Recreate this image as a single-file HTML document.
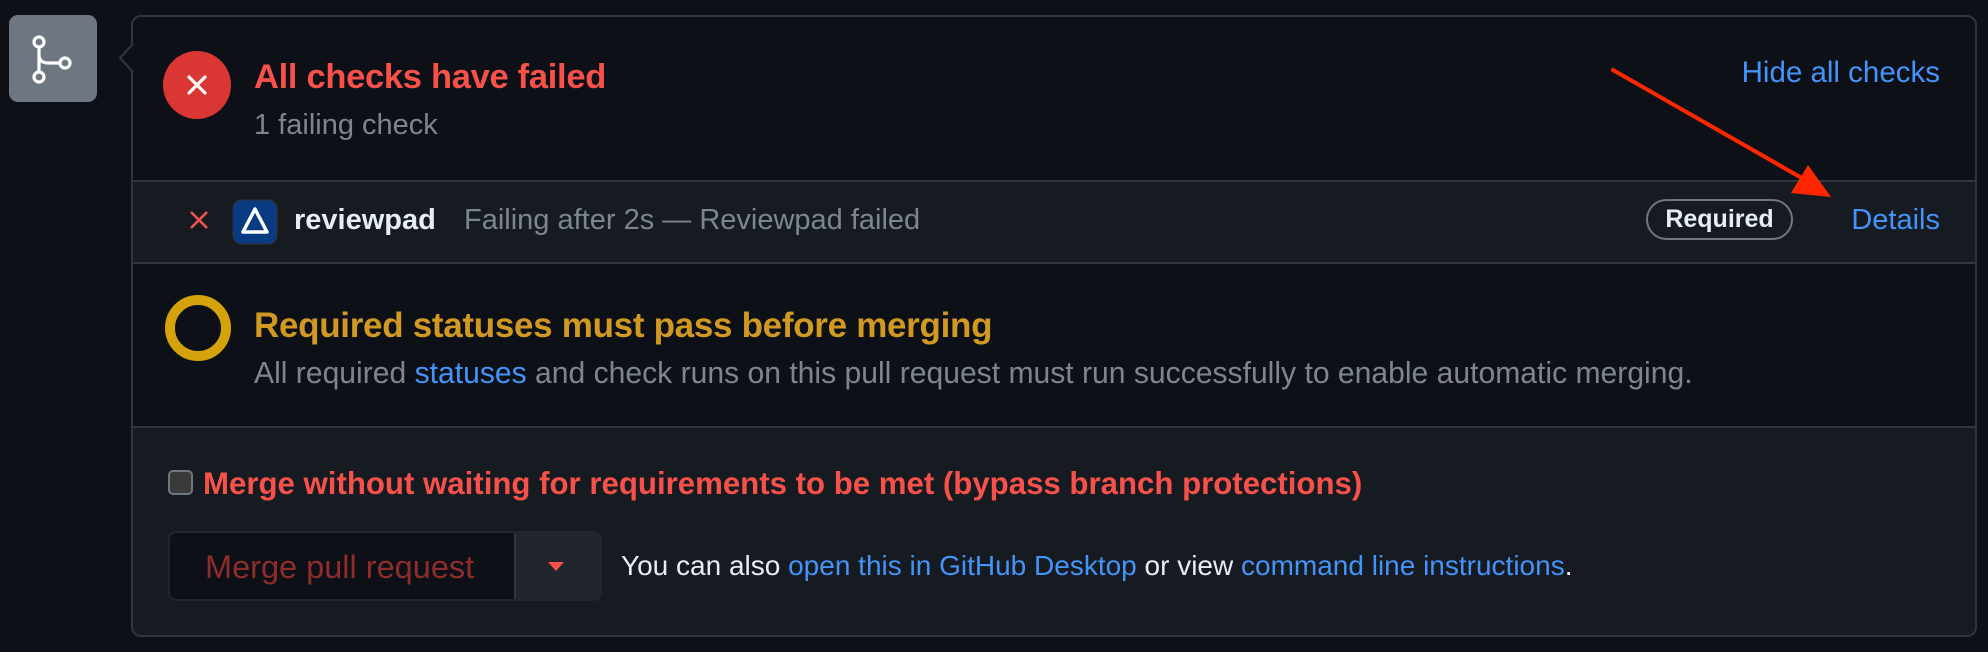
<!DOCTYPE html>
<html><head><meta charset="utf-8"><style>
*{margin:0;padding:0;box-sizing:border-box}
body{width:1988px;height:652px;background:#0d1117;font-family:"Liberation Sans",sans-serif;position:relative;overflow:hidden;color:#e6edf3}
.a{position:absolute;white-space:nowrap}
.blue{color:#4493f8}
</style></head><body>
<div class="a" style="left:9px;top:15px;width:88px;height:87px;background:#6e7681;border-radius:9px"></div>
<svg class="a" style="left:9px;top:15px" width="88" height="87" viewBox="0 0 88 87"><g fill="none" stroke="#fff" stroke-width="3.2"><circle cx="30" cy="27" r="5"/><circle cx="30" cy="62" r="5"/><circle cx="56" cy="48" r="5"/><path d="M30 32V57M30 40c0 6 4 8 10 8h11"/></g></svg>
<div class="a" style="left:131px;top:15px;width:1846px;height:622px;border:2px solid #30363d;border-radius:10px;overflow:hidden;background:#0d1117">
  <div class="a" style="left:0;top:163px;width:100%;height:84px;background:#161b22;border-top:2px solid #30363d;border-bottom:2px solid #30363d"></div>
  <div class="a" style="left:0;top:409px;width:100%;height:220px;background:#161b22;border-top:2px solid #30363d"></div>
</div>
<svg class="a" style="left:118px;top:44px" width="16" height="28"><path d="M15 0L2 14L15 28" fill="#0d1117" stroke="#30363d" stroke-width="2"/></svg>
<!-- header -->
<svg class="a" style="left:163px;top:51px" width="68" height="68"><circle cx="34" cy="34" r="34" fill="#da3633"/><path d="M26 26L42 42M42 26L26 42" stroke="#fff" stroke-width="3.2" stroke-linecap="round"/></svg>
<div class="a" style="left:254px;top:58px;font-size:34.5px;font-weight:bold;color:#f85149;letter-spacing:-0.3px">All checks have failed</div>
<div class="a" style="left:254px;top:109px;font-size:29px;color:#7d8590">1 failing check</div>
<div class="a blue" style="right:48px;top:56px;font-size:29.5px">Hide all checks</div>
<!-- check row -->
<svg class="a" style="left:189px;top:210px" width="20" height="20"><path d="M2 2L18 18M18 2L2 18" stroke="#f85149" stroke-width="2.6"/></svg>
<svg class="a" style="left:232px;top:199px" width="46" height="46" viewBox="0 0 46 46"><rect x="1" y="1" width="44" height="44" rx="9" fill="#0a3a82" stroke="#30363d"/><path d="M23 10L35 33H11Z" fill="none" stroke="#fff" stroke-width="3.5" stroke-linejoin="round"/><path d="M23 18L17 29" stroke="#0a3a82" stroke-width="3"/></svg>
<div class="a" style="left:294px;top:204px;font-size:29px;font-weight:bold;color:#e6edf3">reviewpad</div>
<div class="a" style="left:464px;top:204px;font-size:29px;color:#7d8590">Failing after 2s — Reviewpad failed</div>
<div class="a" style="left:1646px;top:199px;width:147px;height:41px;border:2px solid #6e7681;border-radius:21px;font-size:25px;font-weight:bold;text-align:center;line-height:37px">Required</div>
<div class="a blue" style="right:48px;top:204px;font-size:29px">Details</div>
<!-- required statuses -->
<svg class="a" style="left:164px;top:294px" width="68" height="68"><circle cx="34" cy="34" r="28" fill="none" stroke="#d4a20b" stroke-width="10"/></svg>
<div class="a" style="left:254px;top:306px;font-size:35px;font-weight:bold;color:#d29922;letter-spacing:-0.3px">Required statuses must pass before merging</div>
<div class="a" style="left:254px;top:357px;font-size:30.1px;color:#7d8590">All required <span class="blue">statuses</span> and check runs on this pull request must run successfully to enable automatic merging.</div>
<!-- merge section -->
<div class="a" style="left:168px;top:470px;width:25px;height:25px;border:2px solid #6e7681;border-radius:5px;background:#3a3a3a"></div>
<div class="a" style="left:203px;top:466px;font-size:31.2px;font-weight:bold;color:#f85149">Merge without waiting for requirements to be met (bypass branch protections)</div>
<div class="a" style="left:168px;top:531px;width:434px;height:70px;border:2px solid #21262d;border-radius:8px;background:#0d1117;overflow:hidden">
  <div class="a" style="left:344px;top:0;width:90px;height:70px;background:#21262d;border-left:2px solid #30363d"></div>
</div>
<div class="a" style="left:205px;top:549px;font-size:32.5px;color:#8e2d2b">Merge pull request</div>
<svg class="a" style="left:548px;top:562px" width="16" height="10"><path d="M0 0H16L8 9Z" fill="#f85149"/></svg>
<div class="a" style="left:621px;top:550px;font-size:28px;color:#e6edf3">You can also <span class="blue">open this in GitHub Desktop</span> or view <span class="blue">command line instructions</span>.</div>
<!-- arrow -->
<svg class="a" style="left:0;top:0" width="1988" height="652"><path d="M1613 70L1800 177" stroke="#ff2600" stroke-width="4" stroke-linecap="round"/><path d="M1831 197L1791 193L1808 165Z" fill="#ff2600"/></svg>
</body></html>
